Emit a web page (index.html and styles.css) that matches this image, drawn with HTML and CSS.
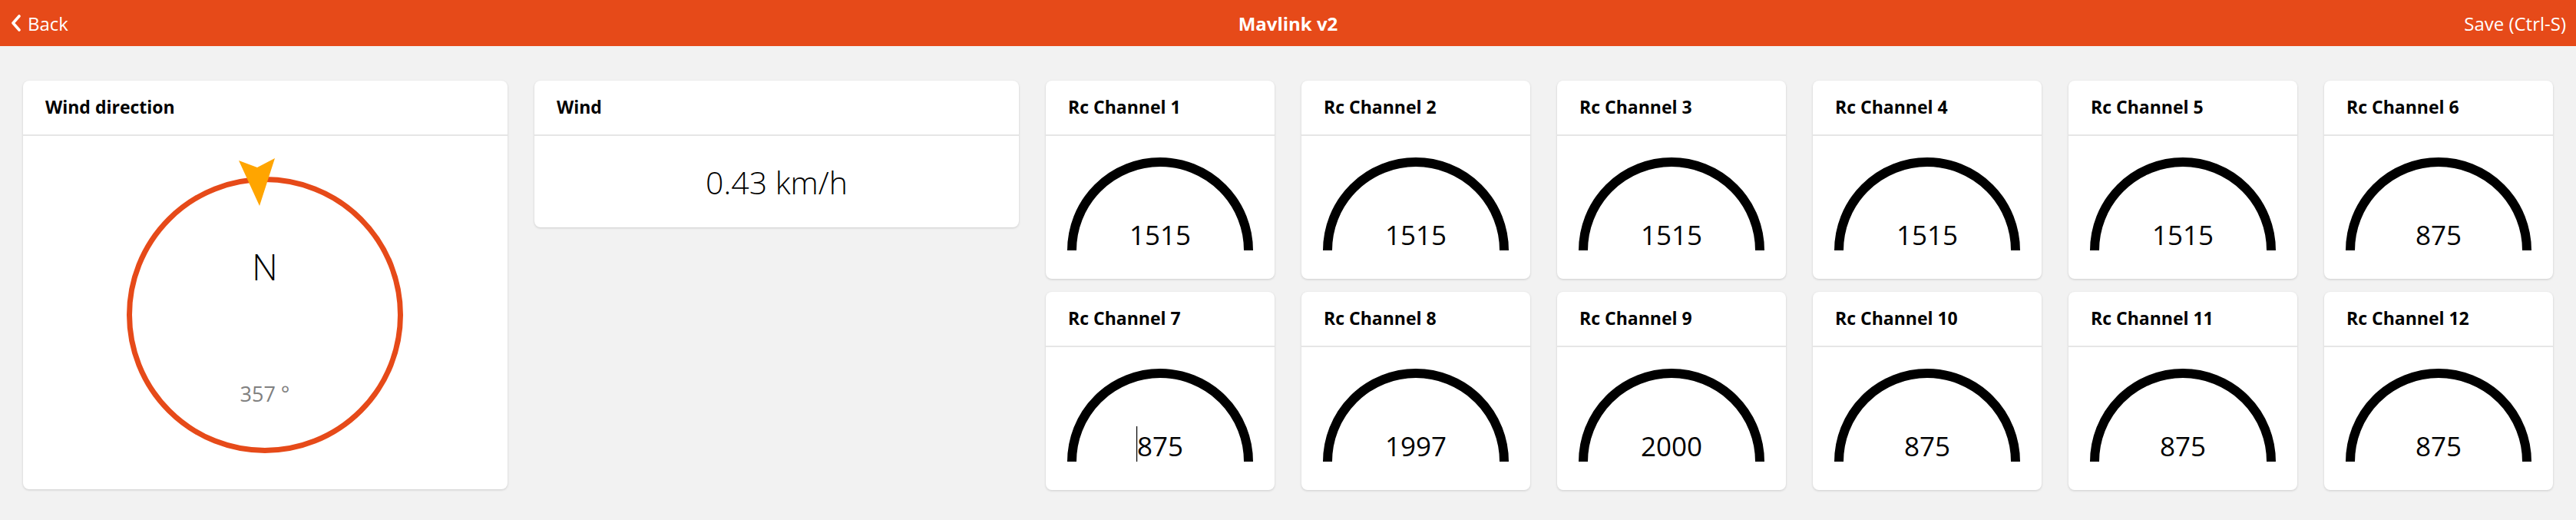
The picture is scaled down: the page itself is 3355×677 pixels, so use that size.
FILE: index.html
```html
<!DOCTYPE html>
<html>
<head>
<meta charset="utf-8">
<link rel="stylesheet" href="styles.css">
</head>
<body>
<header class="topbar">
  <div class="back">
    <svg class="chev" width="16" height="22" viewBox="0 0 16 22"><path d="M12 2 L4 11 L12 20" fill="none" stroke="#fff" stroke-width="3.6" stroke-linecap="round" stroke-linejoin="round"/></svg>
    <span>Back</span>
  </div>
  <div class="title">Mavlink v2</div>
  <div class="save">Save (Ctrl-S)</div>
</header>
<main class="board">
  <section class="card dir">
    <div class="card-head">Wind direction</div>
    <div class="card-body dir-body">
      <svg width="631" height="460" viewBox="0 0 631 460">
        <circle cx="315" cy="233" r="176.5" fill="none" stroke="#e64a19" stroke-width="7"/>
        <polygon points="281,32 305,41 328,29 308,91" fill="#ffa500"/>
        <text x="315" y="188" class="dir-n" text-anchor="middle">N</text>
        <text x="315" y="346" class="dir-deg" text-anchor="middle">357 °</text>
      </svg>
    </div>
  </section>
  <section class="card wind">
    <div class="card-head">Wind</div>
    <div class="card-body wind-body">0.43 km/h</div>
  </section>
  <div class="channels">
    <section class="card rc"><div class="card-head">Rc Channel 1</div><div class="card-body"><svg width="298" height="186" viewBox="0 0 298 186"><path d="M34 149 A115 115 0 0 1 264 149" class="arc"/><text x="149" y="142" class="val" text-anchor="middle">1515</text></svg></div></section>
    <section class="card rc"><div class="card-head">Rc Channel 2</div><div class="card-body"><svg width="298" height="186" viewBox="0 0 298 186"><path d="M34 149 A115 115 0 0 1 264 149" class="arc"/><text x="149" y="142" class="val" text-anchor="middle">1515</text></svg></div></section>
    <section class="card rc"><div class="card-head">Rc Channel 3</div><div class="card-body"><svg width="298" height="186" viewBox="0 0 298 186"><path d="M34 149 A115 115 0 0 1 264 149" class="arc"/><text x="149" y="142" class="val" text-anchor="middle">1515</text></svg></div></section>
    <section class="card rc"><div class="card-head">Rc Channel 4</div><div class="card-body"><svg width="298" height="186" viewBox="0 0 298 186"><path d="M34 149 A115 115 0 0 1 264 149" class="arc"/><text x="149" y="142" class="val" text-anchor="middle">1515</text></svg></div></section>
    <section class="card rc"><div class="card-head">Rc Channel 5</div><div class="card-body"><svg width="298" height="186" viewBox="0 0 298 186"><path d="M34 149 A115 115 0 0 1 264 149" class="arc"/><text x="149" y="142" class="val" text-anchor="middle">1515</text></svg></div></section>
    <section class="card rc"><div class="card-head">Rc Channel 6</div><div class="card-body"><svg width="298" height="186" viewBox="0 0 298 186"><path d="M34 149 A115 115 0 0 1 264 149" class="arc"/><text x="149" y="142" class="val" text-anchor="middle">875</text></svg></div></section>
    <section class="card rc"><div class="card-head">Rc Channel 7</div><div class="card-body"><svg width="298" height="186" viewBox="0 0 298 186"><path d="M34 149 A115 115 0 0 1 264 149" class="arc"/><rect x="118" y="103" width="1.2" height="46" fill="#000"/><text x="149" y="142" class="val" text-anchor="middle">875</text></svg></div></section>
    <section class="card rc"><div class="card-head">Rc Channel 8</div><div class="card-body"><svg width="298" height="186" viewBox="0 0 298 186"><path d="M34 149 A115 115 0 0 1 264 149" class="arc"/><text x="149" y="142" class="val" text-anchor="middle">1997</text></svg></div></section>
    <section class="card rc"><div class="card-head">Rc Channel 9</div><div class="card-body"><svg width="298" height="186" viewBox="0 0 298 186"><path d="M34 149 A115 115 0 0 1 264 149" class="arc"/><text x="149" y="142" class="val" text-anchor="middle">2000</text></svg></div></section>
    <section class="card rc"><div class="card-head">Rc Channel 10</div><div class="card-body"><svg width="298" height="186" viewBox="0 0 298 186"><path d="M34 149 A115 115 0 0 1 264 149" class="arc"/><text x="149" y="142" class="val" text-anchor="middle">875</text></svg></div></section>
    <section class="card rc"><div class="card-head">Rc Channel 11</div><div class="card-body"><svg width="298" height="186" viewBox="0 0 298 186"><path d="M34 149 A115 115 0 0 1 264 149" class="arc"/><text x="149" y="142" class="val" text-anchor="middle">875</text></svg></div></section>
    <section class="card rc"><div class="card-head">Rc Channel 12</div><div class="card-body"><svg width="298" height="186" viewBox="0 0 298 186"><path d="M34 149 A115 115 0 0 1 264 149" class="arc"/><text x="149" y="142" class="val" text-anchor="middle">875</text></svg></div></section>
  </div>
</main>
</body>
</html>
```
FILE: styles.css
```css
* { box-sizing: border-box; }
html, body { margin: 0; padding: 0; }
body {
  background: #f2f2f2;
  font-family: "Segoe UI", "Open Sans", "Noto Sans", sans-serif;
  color: #000;
  width: 3355px;
  height: 677px;
  overflow: hidden;
}
.topbar {
  height: 60px;
  background: #e64a19;
  color: #fff;
  display: grid;
  grid-template-columns: 1fr auto 1fr;
  align-items: center;
  padding: 0 13px;
  font-size: 24px;
}
.back { display: flex; align-items: center; gap: 7px; }
.chev { display: block; }
.title { font-weight: 700; text-align: center; }
.save { text-align: right; }
.board {
  display: flex;
  align-items: flex-start;
  gap: 35px;
  padding: 45px 30px 0;
}
.card {
  background: #fff;
  border-radius: 8px;
  box-shadow: 0 1px 3px rgba(0,0,0,0.16);
  overflow: hidden;
}
.card-head {
  height: 72px;
  padding: 0 0 2px 29px;
  display: flex;
  align-items: center;
  font-size: 23px;
  font-weight: 700;
  border-bottom: 2px solid #e6e6e6;
}
.card-body svg { display: block; }
.dir { width: 631px; height: 532px; }
.dir-n { font-size: 47px; font-weight: 300; fill: #000; }
.dir-deg { font-size: 27px; fill: #808080; }
.wind { width: 631px; }
.wind-body {
  height: 119px;
  display: flex;
  align-items: center;
  justify-content: center;
  font-size: 41px;
  font-weight: 300;
}
.channels {
  display: grid;
  grid-template-columns: repeat(6, 298px);
  column-gap: 35px;
  row-gap: 17px;
}
.rc { height: 258px; }
.arc { fill: none; stroke: #000; stroke-width: 12; }
.val { font-size: 35px; fill: #000; }
```
